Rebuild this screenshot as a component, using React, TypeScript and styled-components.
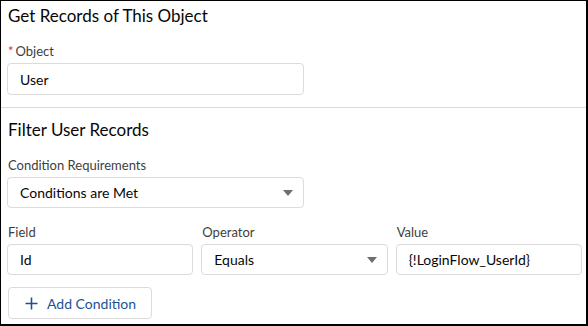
import React from 'react';
import styled, {createGlobalStyle} from "styled-components";

const GlobalStyle = createGlobalStyle`
	html, body {
		margin: 0;
		padding: 0;
		background: #fff;
	}
	body {
		font-family: Lato, "Open Sans", "Liberation Sans", sans-serif;
		color: #080707;
	}
`

const Frame = styled.div`
	width: 588px;
	height: 326px;
	box-sizing: border-box;
	border-style: solid;
	border-color: #000;
	border-width: 1px 2px 2px 1px;
	background: #fff;
	overflow: hidden;
`

const Section = styled.section<{ divided?: boolean }>`
	padding: ${props => props.divided ? "11px 4px 0 6px" : "4px 4px 12px 6px"};
	border-bottom: ${props => props.divided ? "none" : "1px solid #dddbda"};
`

const Title = styled.h2`
	margin: 0 0 15px 1px;
	font-size: 17px;
	font-weight: 400;
	line-height: 22px;
	color: #080707;
`

const Label = styled.label`
	display: block;
	margin: 0 0 3px 1px;
	font-size: 13px;
	line-height: 18px;
	color: #3e3e3c;
`

const Required = styled.abbr`
	color: #c23934;
	text-decoration: none;
	margin-right: 2px;
`

const Field = styled.div<{ width?: number; gap?: number }>`
	width: ${props => props.width ? `${props.width}px` : "auto"};
	margin-bottom: ${props => props.gap ?? 12}px;
`

const Box = styled.div<{ height?: number }>`
	position: relative;
	box-sizing: border-box;
	height: ${props => props.height || 32}px;
	display: flex;
	align-items: center;
	padding: 0 12px;
	border: 1px solid #dddbda;
	border-radius: 4px;
	font-size: 14px;
	color: #080707;
	background: #fff;
`

const Arrow = styled.span`
	position: absolute;
	right: 10px;
	top: 50%;
	margin-top: -3px;
	width: 0;
	height: 0;
	border-left: 5px solid transparent;
	border-right: 5px solid transparent;
	border-top: 6px solid #706e6b;
`

const Row = styled.div`
	display: grid;
	grid-template-columns: 1fr 1fr 1fr;
	column-gap: 8px;
`

const Button = styled.button`
	display: inline-flex;
	align-items: center;
	gap: 9px;
	height: 32px;
	box-sizing: border-box;
	padding: 0 15px 0 16px;
	margin-left: 1px;
	border: 1px solid #dddbda;
	border-radius: 4px;
	background: #fff;
	font-family: inherit;
	font-size: 14px;
	color: #1b5297;
	cursor: pointer;
`

const PlusIcon = () => (
	<svg width="13" height="13" viewBox="0 0 13 13">
		<path d="M6.5 0.5v12M0.5 6.5h12" stroke="#1b5297" strokeWidth="1.6" fill="none"/>
	</svg>
)

const App: React.FC = () => {
	return (
		<>
			<GlobalStyle/>
			<Frame>
				<Section>
					<Title>Get Records of This Object</Title>
					<Field width={297} gap={0}>
						<Label><Required title="required">*</Required>Object</Label>
						<Box>User</Box>
					</Field>
				</Section>
				<Section divided>
					<Title>Filter User Records</Title>
					<Field width={297} gap={15}>
						<Label>Condition Requirements</Label>
						<Box height={31}>Conditions are Met<Arrow/></Box>
					</Field>
					<Row>
						<Field>
							<Label>Field</Label>
							<Box height={31}>Id</Box>
						</Field>
						<Field>
							<Label>Operator</Label>
							<Box height={31}>Equals<Arrow/></Box>
						</Field>
						<Field>
							<Label>Value</Label>
							<Box height={31}>{"{!LoginFlow_UserId}"}</Box>
						</Field>
					</Row>
					<Button type="button"><PlusIcon/>Add Condition</Button>
				</Section>
			</Frame>
		</>
	);
}

export default App;
